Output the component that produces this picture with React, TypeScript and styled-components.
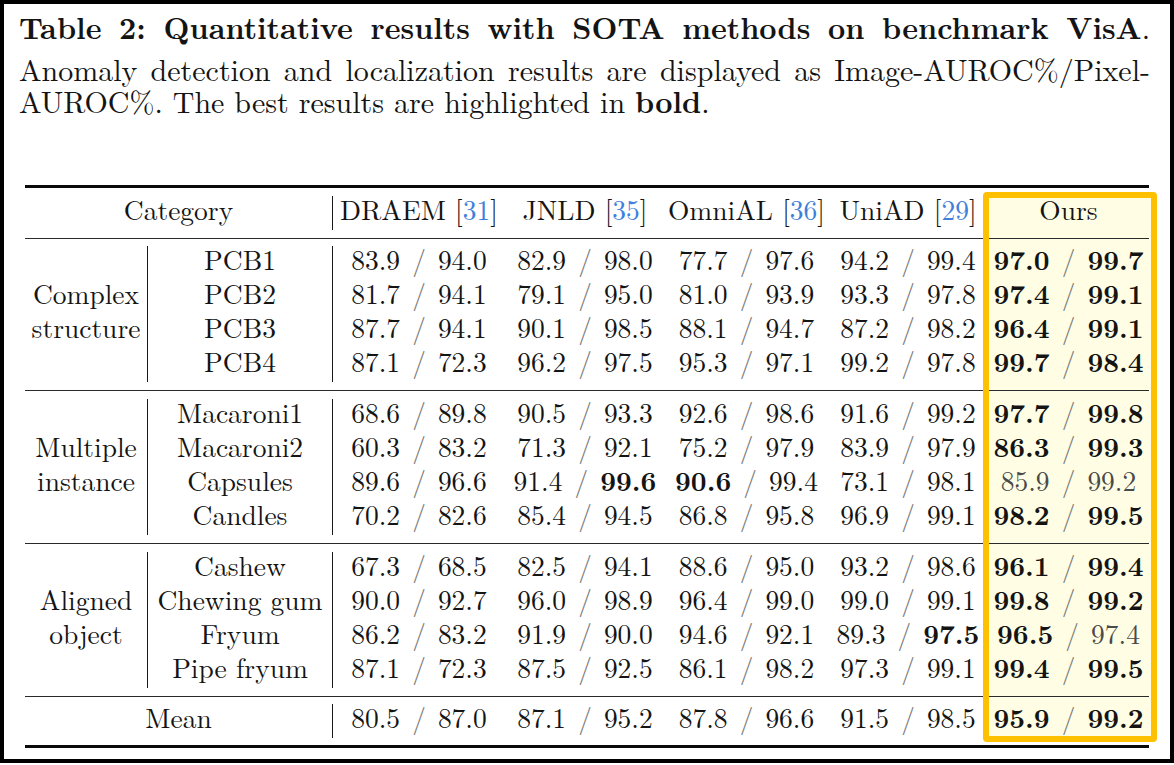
import React from 'react';
import styled, { createGlobalStyle } from 'styled-components';

const SERIF = `'Latin Modern Roman', 'CMU Serif', 'Liberation Serif', serif`;

const GlobalStyle = createGlobalStyle`
  html, body { margin: 0; padding: 0; background: #ffffff; }
  body { font-family: ${SERIF}; color: #141414; }
`;

const Frame = styled.div`
  box-sizing: border-box;
  width: 1174px;
  height: 763px;
  border: 4px solid #000;
  display: flex;
  flex-direction: column;
  font-family: ${SERIF};
`;

const Caption = styled.div`
  margin: 7px 20px 0 15px;
  font-family: ${SERIF};
  font-size: 30px;
  line-height: 32px;
  color: #141414;
`;

const CaptionLine = styled.div<{ $justify?: boolean; $gap?: number }>`
  text-align: ${(p) => (p.$justify ? 'justify' : 'left')};
  text-align-last: ${(p) => (p.$justify ? 'justify' : 'left')};
  margin-bottom: ${(p) => p.$gap ?? 0}px;
`;

const B = styled.b`
  font-weight: 700;
`;

const TableArea = styled.div`
  position: relative;
  margin: 68px 0 0 21px;
  width: 1124px;
  font-family: ${SERIF};
  font-size: 27.5px;
`;

const TableBody = styled.div`
  position: relative;
  z-index: 1;
  display: flex;
  flex-direction: column;
`;

const Rule = styled.div<{ $h: number; $c?: string }>`
  height: ${(p) => p.$h}px;
  background: ${(p) => p.$c ?? '#111'};
`;

const COLS = '123px 185px 172px 160px 163px 160px 161px';
const RIGHT_COLS = '172px 160px 163px 160px 161px';

const HeaderRow = styled.div`
  display: grid;
  grid-template-columns: 308px ${RIGHT_COLS};
  grid-auto-rows: 34px;
  padding: 8px 0;
`;

const GroupBlock = styled.div<{ $top: number; $bottom: number }>`
  display: grid;
  grid-template-columns: ${COLS};
  grid-auto-rows: 34px;
  padding: ${(p) => p.$top}px 0 ${(p) => p.$bottom}px;
`;

const MeanRow = styled.div`
  display: grid;
  grid-template-columns: 308px ${RIGHT_COLS};
  grid-auto-rows: 34px;
  padding: 7px 0 7px;
`;

const Cell = styled.div<{ $line?: boolean }>`
  display: flex;
  align-items: center;
  justify-content: center;
  white-space: nowrap;
  box-sizing: border-box;
  border-right: ${(p) => (p.$line ? '1px solid #1a1a1a' : 'none')};
  line-height: 34px;
  padding-bottom: 8px;
`;

const CellText = styled.span`
  line-height: 26px;
`;

const GroupLabel = styled.div`
  grid-row: span 4;
  display: flex;
  flex-direction: column;
  align-items: center;
  justify-content: center;
  box-sizing: border-box;
  border-right: 1px solid #1a1a1a;
  line-height: 34px;
  padding-bottom: 8px;
`;

const Cite = styled.span`
  color: #3f80dc;
`;

const Num = styled.span<{ $bold?: boolean; $soft?: boolean }>`
  font-weight: ${(p) => (p.$bold ? 700 : 400)};
  color: ${(p) => (p.$soft ? '#4a4a4a' : '#141414')};
`;

const Slash = styled.span`
  color: #7a7a7a;
  margin: 0 12px;
`;

const HighlightFill = styled.div`
  position: absolute;
  z-index: 0;
  left: 958px;
  top: 7px;
  width: 174px;
  height: 550px;
  border-radius: 4px;
  background: #fffee4;
`;

const HighlightFrame = styled.div`
  position: absolute;
  z-index: 2;
  left: 958px;
  top: 7px;
  width: 174px;
  height: 550px;
  box-sizing: border-box;
  border: 6px solid #ffc000;
  border-radius: 4px;
  pointer-events: none;
`;

type Row = { name: string; vals: string[] };

const groups: { label: [string, string]; rows: Row[] }[] = [
  {
    label: ['Complex', 'structure'],
    rows: [
      { name: 'PCB1', vals: ['83.9 94.0', '82.9 98.0', '77.7 97.6', '94.2 99.4', '!97.0 !99.7'] },
      { name: 'PCB2', vals: ['81.7 94.1', '79.1 95.0', '81.0 93.9', '93.3 97.8', '!97.4 !99.1'] },
      { name: 'PCB3', vals: ['87.7 94.1', '90.1 98.5', '88.1 94.7', '87.2 98.2', '!96.4 !99.1'] },
      { name: 'PCB4', vals: ['87.1 72.3', '96.2 97.5', '95.3 97.1', '99.2 97.8', '!99.7 !98.4'] },
    ],
  },
  {
    label: ['Multiple', 'instance'],
    rows: [
      { name: 'Macaroni1', vals: ['68.6 89.8', '90.5 93.3', '92.6 98.6', '91.6 99.2', '!97.7 !99.8'] },
      { name: 'Macaroni2', vals: ['60.3 83.2', '71.3 92.1', '75.2 97.9', '83.9 97.9', '!86.3 !99.3'] },
      { name: 'Capsules', vals: ['89.6 96.6', '91.4 !99.6', '!90.6 99.4', '73.1 98.1', '85.9 99.2'] },
      { name: 'Candles', vals: ['70.2 82.6', '85.4 94.5', '86.8 95.8', '96.9 99.1', '!98.2 !99.5'] },
    ],
  },
  {
    label: ['Aligned', 'object'],
    rows: [
      { name: 'Cashew', vals: ['67.3 68.5', '82.5 94.1', '88.6 95.0', '93.2 98.6', '!96.1 !99.4'] },
      { name: 'Chewing gum', vals: ['90.0 92.7', '96.0 98.9', '96.4 99.0', '99.0 99.1', '!99.8 !99.2'] },
      { name: 'Fryum', vals: ['86.2 83.2', '91.9 90.0', '94.6 92.1', '89.3 !97.5', '!96.5 97.4'] },
      { name: 'Pipe fryum', vals: ['87.1 72.3', '87.5 92.5', '86.1 98.2', '97.3 99.1', '!99.4 !99.5'] },
    ],
  },
];

const mean = ['80.5 87.0', '87.1 95.2', '87.8 96.6', '91.5 98.5', '!95.9 !99.2'];

const Pair: React.FC<{ v: string; ours?: boolean }> = ({ v, ours }) => {
  const [a, b] = v.split(' ');
  const part = (s: string) => {
    const bold = s.startsWith('!');
    return (
      <Num $bold={bold} $soft={ours && !bold}>
        {bold ? s.slice(1) : s}
      </Num>
    );
  };
  return (
    <CellText>
      {part(a)}
      <Slash>/</Slash>
      {part(b)}
    </CellText>
  );
};

const headers: { name: string; cite?: string }[] = [
  { name: 'DRAEM', cite: '31' },
  { name: 'JNLD', cite: '35' },
  { name: 'OmniAL', cite: '36' },
  { name: 'UniAD', cite: '29' },
  { name: 'Ours' },
];

export default function App() {
  return (
    <>
      <GlobalStyle />
      <Frame>
        <Caption>
          <CaptionLine $justify $gap={10}>
            <B>Table 2: Quantitative results with SOTA methods on benchmark VisA</B>.
          </CaptionLine>
          <CaptionLine $justify>
            Anomaly detection and localization results are displayed as Image-AUROC%/Pixel-
          </CaptionLine>
          <CaptionLine>
            AUROC%. The best results are highlighted in <B>bold</B>.
          </CaptionLine>
        </Caption>

        <TableArea>
          <HighlightFill />
          <TableBody>
            <Rule $h={3} $c="#0a0a0a" />
            <HeaderRow>
              <Cell $line>
                <CellText>Category</CellText>
              </Cell>
              {headers.map((h) => (
                <Cell key={h.name}>
                  <CellText>
                    {h.name}
                    {h.cite && (
                      <>
                        {' '}[<Cite>{h.cite}</Cite>]
                      </>
                    )}
                  </CellText>
                </Cell>
              ))}
            </HeaderRow>
            <Rule $h={1} $c="#2a2a2a" />
            {groups.map((g, gi) => (
              <React.Fragment key={g.label[0]}>
                <GroupBlock $top={gi === 0 ? 7 : 8} $bottom={8}>
                  <GroupLabel>
                    <span>{g.label[0]}</span>
                    <span>{g.label[1]}</span>
                  </GroupLabel>
                  {g.rows.map((r) => (
                    <React.Fragment key={r.name}>
                      <Cell $line>
                        <CellText>{r.name}</CellText>
                      </Cell>
                      {r.vals.map((v, i) => (
                        <Cell key={i}>
                          <Pair v={v} ours={i === 4} />
                        </Cell>
                      ))}
                    </React.Fragment>
                  ))}
                </GroupBlock>
                <Rule $h={1} $c="#2a2a2a" />
              </React.Fragment>
            ))}
            <MeanRow>
              <Cell $line>
                <CellText>Mean</CellText>
              </Cell>
              {mean.map((v, i) => (
                <Cell key={i}>
                  <Pair v={v} ours={i === 4} />
                </Cell>
              ))}
            </MeanRow>
            <Rule $h={3} $c="#0a0a0a" />
          </TableBody>
          <HighlightFrame />
        </TableArea>
      </Frame>
    </>
  );
}
